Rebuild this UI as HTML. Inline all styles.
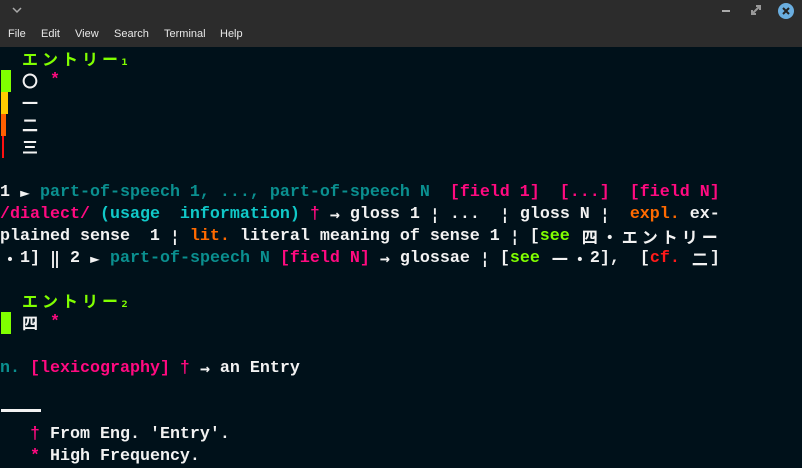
<!DOCTYPE html>
<html><head><meta charset="utf-8"><style>
*{margin:0;padding:0;box-sizing:border-box}
body{width:802px;height:467px;overflow:hidden;background:#00111a;position:relative;font-family:"Liberation Mono","Noto Sans CJK JP",monospace;}
#tb{position:absolute;left:0;top:0;width:802px;height:24px;background:#2c2c2c}
#mb{position:absolute;left:0;top:24px;width:802px;height:23px;background:#2c2c2c;font-family:"Liberation Sans",sans-serif;font-size:11px;color:#e8e8e8}
#mb span{position:absolute;top:4px}
.l{position:absolute;left:0;height:22px;line-height:22px;font-size:16.67px;font-weight:bold;white-space:pre;color:#f2f2f2}
.w{display:inline-block;width:20px;height:22px;line-height:21px;text-align:center;font-family:"Noto Sans CJK JP",sans-serif;font-weight:bold;font-size:16px;vertical-align:top}
.n{display:inline-block;width:10px;height:22px;line-height:22px;text-align:center;font-family:"DejaVu Sans Mono",monospace;font-weight:bold;vertical-align:top}
.tri{font-size:16px}
.g{color:#80ff00}.m{color:#ff0a80}.t{color:#0a8f8f}.c{color:#10c8c8}.o{color:#ff6a00}.r{color:#ff1a1a}
.sub{font-family:"DejaVu Sans Mono",monospace;font-size:15px;display:inline-block;width:10px;vertical-align:top;line-height:22px;padding-top:1px}
.bar{position:absolute;left:1px}
</style></head><body>
<div id="tb">
<svg style="position:absolute;left:12px;top:6px" width="10" height="8"><path d="M1 2 L5 6 L9 2" stroke="#aaa" stroke-width="1.5" fill="none"/></svg>
<div style="position:absolute;left:722px;top:10px;width:8px;height:2px;background:#aaa"></div>
<svg style="position:absolute;left:751px;top:5px" width="10" height="10"><path d="M1 9 L9 1 M5 1 H9 V5 M1 5 V9 H5" stroke="#999" stroke-width="2" fill="none"/></svg>
<div style="position:absolute;left:778px;top:3px;width:16px;height:16px;border-radius:50%;background:#6aaee0"></div>
<svg style="position:absolute;left:782px;top:7px" width="8" height="8"><path d="M1 1 L7 7 M7 1 L1 7" stroke="#222" stroke-width="2"/></svg>
</div>
<div id="mb"><span style="left:8px">File</span><span style="left:41px">Edit</span><span style="left:75px">View</span><span style="left:114px">Search</span><span style="left:164px">Terminal</span><span style="left:220px">Help</span></div>

<div class="bar" style="top:70px;width:10px;height:22px;background:#80ff00"></div>
<div class="bar" style="top:92px;width:7px;height:22px;background:#ffcc00"></div>
<div class="bar" style="top:114px;width:5px;height:22px;background:#ff6000"></div>
<div class="bar" style="top:136px;left:2px;width:2px;height:22px;background:#ff1010"></div>
<div class="bar" style="top:312px;width:10px;height:22px;background:#80ff00"></div>
<div style="position:absolute;left:1px;top:409px;width:40px;height:3px;background:#f2f2f2"></div>

<div class="l g" style="top:48px">  <span class="w">エ</span><span class="w">ン</span><span class="w">ト</span><span class="w">リ</span><span class="w">ー</span><span class="sub">₁</span></div>
<div class="l" style="top:70px">  <span class="w">〇</span> <span class="m">*</span></div>
<div class="l" style="top:92px">  <span class="w">一</span></div>
<div class="l" style="top:114px">  <span class="w">二</span></div>
<div class="l" style="top:136px">  <span class="w">三</span></div>
<div class="l" style="top:182px">1 <span class="n tri">►</span> <span class="t">part-of-speech 1, ..., part-of-speech N</span>  <span class="m">[field 1]  [...]  [field N]</span></div>
<div class="l" style="top:204px"><span class="m">/dialect/</span> <span class="c">(usage  information)</span> <span class="m">†</span> <span class="n">→</span> gloss 1 <span class="n">¦</span> ...  <span class="n">¦</span> gloss N <span class="n">¦</span>  <span class="o">expl.</span> ex-</div>
<div class="l" style="top:226px">plained sense  1 <span class="n">¦</span> <span class="o">lit.</span> literal meaning of sense 1 <span class="n">¦</span> [<span class="g">see</span> <span class="w">四</span><span class="w">・</span><span class="w">エ</span><span class="w">ン</span><span class="w">ト</span><span class="w">リ</span><span class="w">ー</span></div>
<div class="l" style="top:248px"><span class="w">・</span>1] <span class="n">‖</span> 2 <span class="n tri">►</span> <span class="t">part-of-speech N</span> <span class="m">[field N]</span> <span class="n">→</span> glossae <span class="n">¦</span> [<span class="g">see</span> <span class="w">一</span><span class="w">・</span>2],  [<span class="r">cf.</span> <span class="w">二</span>]</div>
<div class="l g" style="top:290px">  <span class="w">エ</span><span class="w">ン</span><span class="w">ト</span><span class="w">リ</span><span class="w">ー</span><span class="sub">₂</span></div>
<div class="l" style="top:312px">  <span class="w">四</span> <span class="m">*</span></div>
<div class="l" style="top:358px"><span class="t">n.</span> <span class="m">[lexicography] †</span> <span class="n">→</span> an Entry</div>
<div class="l" style="top:424px">   <span class="m">†</span> From Eng. 'Entry'.</div>
<div class="l" style="top:446px">   <span class="m">*</span> High Frequency.</div>
</body></html>
